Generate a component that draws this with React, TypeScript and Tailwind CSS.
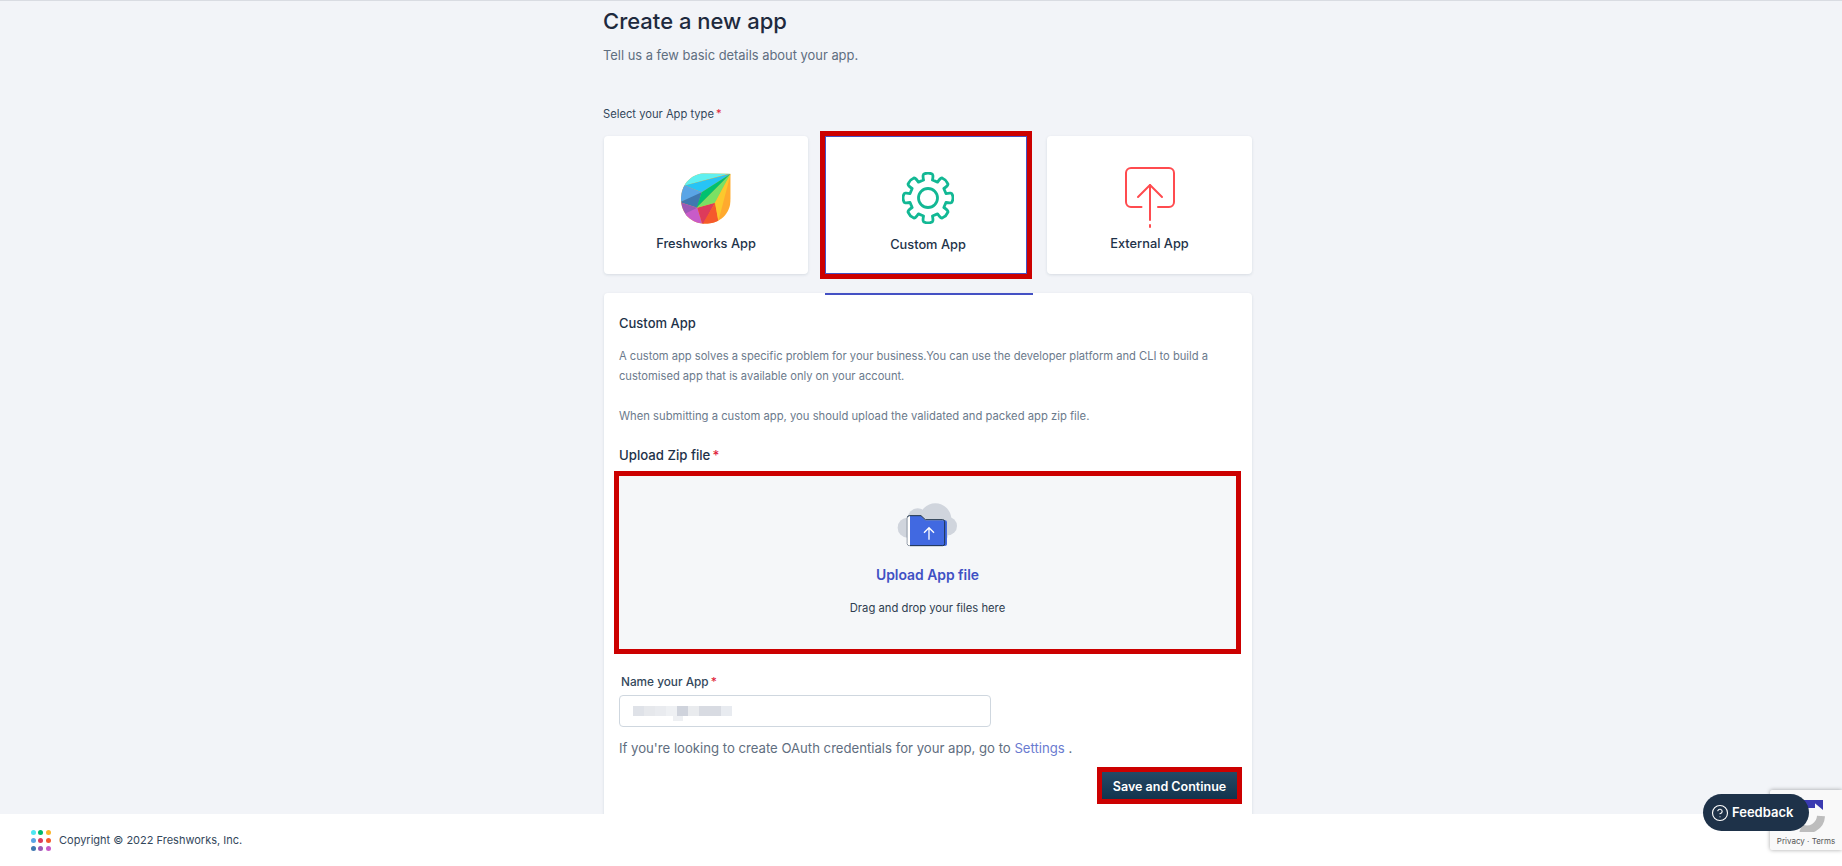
import { CircleHelp } from 'lucide-react';

const gearPath = (() => {
  const cx = 26;
  const cy = 26;
  const teeth = 8;
  const outer = 24.5;
  const inner = 18.5;
  const pts: string[] = [];
  for (let i = 0; i < teeth; i++) {
    const a = (i * Math.PI * 2) / teeth - Math.PI / 2;
    const step = Math.PI / teeth;
    const at = (r: number, t: number) =>
      `${(cx + r * Math.cos(t)).toFixed(2)} ${(cy + r * Math.sin(t)).toFixed(2)}`;
    const start = at(inner, a - step * 0.62);
    const tipA = at(outer, a - step * 0.34);
    const tipB = at(outer, a + step * 0.34);
    const end = at(inner, a + step * 0.62);
    pts.push(`${i === 0 ? 'M' : 'L'}${start} Q${at(outer + 0.5, a - step * 0.6)} ${tipA} Q${at(outer + 1.2, a)} ${tipB} Q${at(outer + 0.5, a + step * 0.6)} ${end}`);
  }
  return pts.join(' ') + ' Z';
})();

function FreshworksLogo() {
  return (
    <svg width="50" height="51" viewBox="63 68 150 152">
      <defs>
        <clipPath id="leaf">
          <path d="M212 70 L130 68 C90 72 63 105 63 145 C63 190 95 220 135 220 C180 220 212 190 212 145 Z" />
        </clipPath>
      </defs>
      <g clipPath="url(#leaf)">
        <rect x="60" y="60" width="160" height="165" fill="#ffaa2e" />
        <polygon points="212,68 60,60 60,108 75,105" fill="#5ff0f0" />
        <polygon points="212,70 75,105 125,125" fill="#27c4f5" />
        <polygon points="60,100 75,105 125,125 112,135 60,155" fill="#5aa5e6" />
        <polygon points="60,155 112,172 125,125" fill="#3f78b0" />
        <polygon points="60,155 112,172 85,195 60,225" fill="#9b59b6" />
        <polygon points="75,190 112,172 128,225 80,225" fill="#c85bc8" />
        <polygon points="112,172 165,157 128,225" fill="#dd3b5b" />
        <polygon points="165,157 178,225 125,225" fill="#f55a2c" />
        <polygon points="212,70 125,125 110,172" fill="#00c170" />
        <polygon points="212,70 110,172 165,157" fill="#7be064" />
        <polygon points="212,70 165,157 175,212" fill="#fcc82d" />
      </g>
    </svg>
  );
}

function GearIcon() {
  return (
    <svg width="52" height="52" viewBox="0 0 52 52" fill="none" stroke="#12b894" strokeWidth="2.8" strokeLinejoin="round">
      <path d={gearPath} />
      <circle cx="26" cy="26" r="9.5" />
    </svg>
  );
}

function ExternalIcon() {
  return (
    <svg width="52" height="62" viewBox="0 0 52 62" fill="none" stroke="#ff4b4f" strokeWidth="2" strokeLinecap="round" strokeLinejoin="round">
      <path d="M17.5 40 H7 a5 5 0 0 1 -5 -5 V6 a5 5 0 0 1 5 -5 H45 a5 5 0 0 1 5 5 V35 a5 5 0 0 1 -5 5 H34" />
      <path d="M26 18 V53" />
      <path d="M14 30 L26 18 L38 30" />
      <path d="M26 58 V60" />
    </svg>
  );
}

function FolderIcon() {
  return (
    <svg width="64" height="47" viewBox="50 30 192 141">
      <circle cx="168" cy="85" r="48" fill="#d0d5dd" />
      <circle cx="85" cy="110" r="30" fill="#d0d5dd" />
      <circle cx="205" cy="105" r="28" fill="#d0d5dd" />
      <circle cx="115" cy="82" r="30" fill="#d0d5dd" />
      <rect x="95" y="110" width="110" height="30" fill="#d0d5dd" />
      <path d="M92 74 H125 L138 88 H198 Q203 88 203 94 V160 Q203 165 197 165 H92 Z" fill="#4169e1" />
      <path d="M90 74 H125 L138 86 H190 Q196 86 196 92 V158 Q196 164 190 164 H92 Q84 164 84 158 V80 Q84 74 90 74 Z" fill="none" stroke="#1e3249" strokeWidth="3" />
      <path d="M84 80 V158 Q84 164 92 164 V76" fill="#fff" />
      <path d="M149 146 V110 M134 125 L149 110 L164 125" fill="none" stroke="#fff" strokeWidth="4" />
    </svg>
  );
}

function Dots() {
  const colors = ['#4fe6f2', '#00b86b', '#fbb62a', '#5aa5e6', '#dd3b5b', '#f55a2c', '#3f78b0', '#9b59b6', '#c85bc8'];
  return (
    <div className="grid w-[19px] grid-cols-3 gap-[3px]">
      {colors.map((c) => (
        <span key={c} className="h-[5px] w-[5px] rounded-full" style={{ backgroundColor: c }} />
      ))}
    </div>
  );
}

function Required() {
  return <span className="ml-[2px] text-[#e01e3c]">*</span>;
}

function BlurredName() {
  const cells = ['#dfe2e8', '#e6e8ec', '#e9ebef', '#eef0f3', '#cfd3dc', '#e9ebee', '#d8dbe2', '#d8dbe2', '#e8ebf0'];
  return (
    <div className="relative flex h-[10px]">
      {cells.map((c, i) => (
        <span key={i} className="h-full w-[11px]" style={{ backgroundColor: c }} />
      ))}
      <span className="absolute left-[40px] top-[10px] h-[5px] w-[10px] bg-[#eef0f3]" />
    </div>
  );
}

export default function App() {
  return (
    <div className="flex h-[866px] flex-col overflow-hidden bg-white font-['Inter',sans-serif] text-[#1e3249]">
      <main className="h-[814px] shrink-0 overflow-hidden border-t border-[#d9dce2] bg-[#f2f4f8] pl-[14px]">
        <div className="mx-auto w-[648px]">
          <h1 className="ml-[-1px] pt-[5px] text-[22px] font-medium leading-[30px] text-[#1e2a3e]">Create a new app</h1>
          <p className="ml-[-1px] mt-[10px] text-[12.9px] leading-[20px] text-[#5f6e80]">Tell us a few basic details about your app.</p>

          <div className="ml-[-1px] mt-[40px] text-[11.2px] leading-[16px] text-[#33475b]">
            Select your App type
            <Required />
          </div>

          <div className="mt-[14px] flex">
            <button className="flex h-[138px] w-[204px] flex-col items-center rounded-[4px] bg-white pt-[37px] shadow-[0_1px_3px_rgba(18,52,77,0.12)]">
              <FreshworksLogo />
              <span className="mt-[12px] text-[12.8px] font-medium leading-[16px]">Freshworks App</span>
            </button>
            <button className="ml-[17px] flex h-[138px] w-[202px] flex-col items-center border-[1.5px] border-[#4451c4] bg-white pl-[4px] pt-[35px] outline-[5px] outline-[#cc0000]">
              <GearIcon />
              <span className="mt-[13px] text-[12.8px] font-medium leading-[16px]">Custom App</span>
            </button>
            <button className="ml-[20px] flex h-[138px] w-[205px] flex-col items-center rounded-[4px] bg-white pt-[31px] shadow-[0_1px_3px_rgba(18,52,77,0.12)]">
              <ExternalIcon />
              <span className="mt-[7px] text-[12.8px] font-medium leading-[16px]">External App</span>
            </button>
          </div>

          <section className="relative mt-[19px] rounded-t-[4px] bg-white px-[15px] pt-[22px] shadow-[0_1px_3px_rgba(18,52,77,0.12)]">
            <span className="absolute left-[221px] top-0 h-[2px] w-[208px] bg-[#4451c4]" />
            <h2 className="text-[13px] font-medium leading-[16px]">Custom App</h2>
            <p className="mt-[15px] text-[11.15px] leading-[20px] text-[#6b7a8c]">
              A custom app solves a specific problem for your business.You can use the developer platform and CLI to build a
              <br />
              customised app that is available only on your account.
            </p>
            <p className="mt-[20px] text-[11.25px] leading-[20px] text-[#6b7a8c]">
              When submitting a custom app, you should upload the validated and packed app zip file.
            </p>

            <div className="mt-[21px] text-[13.2px] font-medium leading-[16px]">
              Upload Zip file
              <Required />
            </div>

            <div className="mt-[8px] ml-[-5px] flex h-[183px] w-[627px] flex-col items-center border-[5px] border-[#cc0000] bg-[#f5f7f9] pt-[25px]">
              <FolderIcon />
              <span className="mt-[19px] text-[13.9px] font-semibold leading-[16px] text-[#3f51c4]">Upload App file</span>
              <span className="mt-[17px] text-[11.25px] leading-[16px] text-[#2f3e50]">Drag and drop your files here</span>
            </div>

            <div className="mt-[20px] ml-[2px] text-[11.8px] font-medium leading-[16px] text-[#33475b]">
              Name your App
              <Required />
            </div>
            <div className="mt-[5px] flex h-[32px] w-[372px] items-center rounded-[4px] border border-[#cfd7df] bg-white pl-[13px]">
              <BlurredName />
            </div>
            <p className="mt-[12px] text-[13.15px] leading-[18px] text-[#5f6e80]">
              If you're looking to create OAuth credentials for your app, go to{' '}
              <a className="text-[#6a7bd0]">Settings</a> .
            </p>
            <div className="mt-[10px] mr-[-5px] flex justify-end">
              <button className="h-[37px] w-[145px] border-[5px] border-[#cc0000] bg-gradient-to-b from-[#264966] to-[#12344d] pt-[3px] text-[12.5px] font-semibold text-white">
                Save and Continue
              </button>
            </div>
            <div className="h-[20px]" />
          </section>
        </div>
      </main>

      <footer className="flex flex-1 items-center gap-[9px] bg-white pl-[31px] text-[11px] text-[#33475b]">
        <Dots />
        <span>Copyright © 2022 Freshworks, Inc.</span>
      </footer>

      <div className="absolute left-[1770px] top-[790px] flex h-[60px] w-[72px] flex-col items-center justify-end overflow-hidden rounded-l-[2px] bg-[#f9f9f9] pb-[4px] shadow-[0_0_4px_rgba(0,0,0,0.35)]">
        <svg className="absolute left-[21px] top-[2px]" width="36" height="40" viewBox="0 0 36 40" fill="none">
          <path d="M10 36 A14 14 0 0 0 30 24" stroke="#bdbdbd" strokeWidth="8" />
          <path d="M20 8 H32 V18 Z" fill="#3a3ab0" />
          <path d="M10 8 H24 V16 H10 Z" fill="#3a3ab0" />
        </svg>
        <span className="relative text-[8px] leading-[10px] text-[#555]">Privacy · Terms</span>
      </div>
      <div className="absolute left-[1703px] top-[794px] flex h-[37px] w-[106px] items-center gap-[3px] rounded-full bg-[#1e3249] pl-[8px] text-[13px] font-semibold text-white">
        <CircleHelp size={18} strokeWidth={1.5} />
        Feedback
      </div>
    </div>
  );
}
